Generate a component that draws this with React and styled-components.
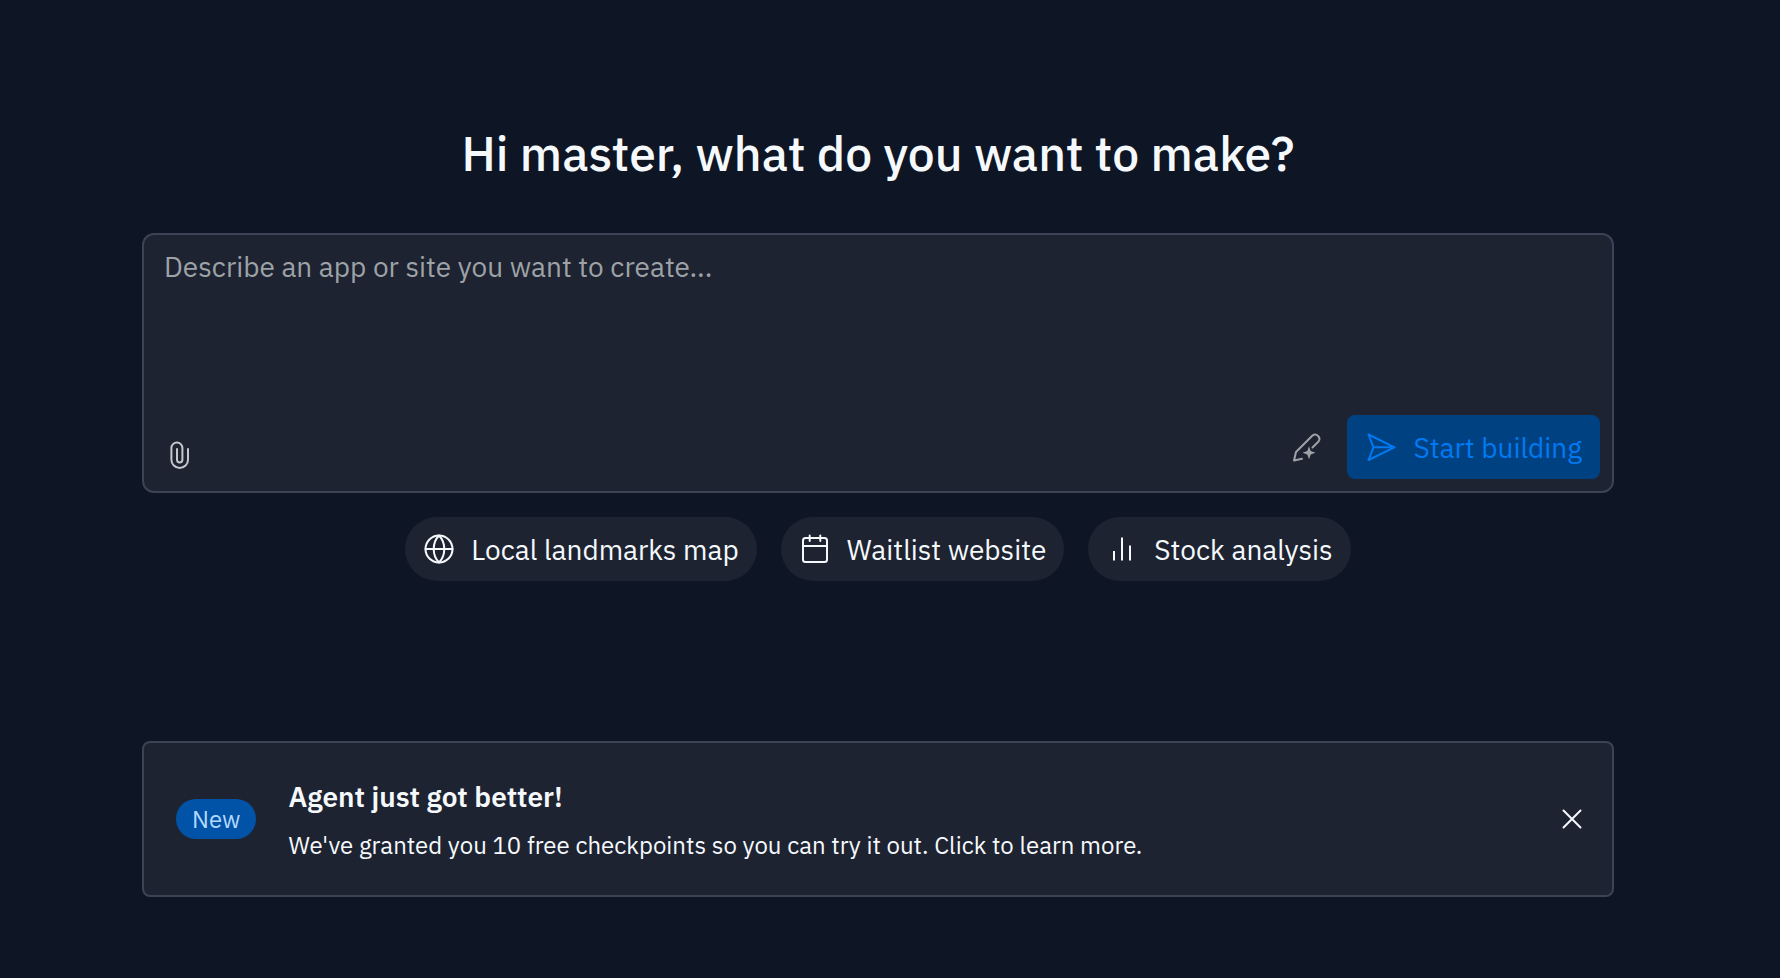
import React, { useState } from "react";
import styled, { createGlobalStyle } from "styled-components";

const suggestions = [
  { label: "Local landmarks map", icon: "globe" },
  { label: "Waitlist website", icon: "calendar" },
  { label: "Stock analysis", icon: "chart" },
];

const Icon = ({ name, size = 32 }) => (
  <svg
    width={size}
    height={size}
    viewBox="0 0 32 32"
    fill="none"
    stroke="currentColor"
    strokeWidth="2"
    strokeLinecap="round"
    strokeLinejoin="round"
    aria-hidden="true"
  >
    {name === "globe" && (
      <>
        <circle cx="16" cy="16" r="13.5" />
        <path d="M2.5 16h27" />
        <path d="M16 2.5c-3.6 3.7-5.3 8.5-5.3 13.5s1.7 9.8 5.3 13.5c3.6-3.7 5.3-8.5 5.3-13.5s-1.700-9.800-5.300-13.500z" />
      </>
    )}
    {name === "calendar" && (
      <>
        <rect x="4" y="5" width="24" height="24" rx="2.5" />
        <path d="M4 13h24M10.7 2.5V8M21.3 2.5V8" />
      </>
    )}
    {name === "chart" && (
      <path d="M8 18V27.5M16 4.5v23M24 12.5v15" strokeLinecap="butt" />
    )}
    {name === "clip" && (
      <path d="M24 10v10.700a8.300 8.300 0 0 1-16.600 0V9a5.500 5.500 0 0 1 11 0v11.700a2.700 2.700 0 0 1-5.400 0V10" />
    )}
    {name === "send" && (
      <path d="M3.500 3.500 29.500 16.300 3.500 29 8.500 16.300zM8.500 16.300H29.500" />
    )}
    {name === "pen" && (
      <>
        <path d="M11 27.700 3 29.500l2-8.500L21.500 4.500a4.300 4.300 0 0 1 6 6l-6 6" />
        <path
          d="M18 15.200l1.700 4.800 4.800 1.700-4.800 1.700L18 28.200l-1.700-4.800-4.800-1.700 4.800-1.700z"
          fill="currentColor"
          stroke="none"
        />
      </>
    )}
    {name === "close" && <path d="M7.5 7.5l17 17M24.5 7.5l-17 17" />}
  </svg>
);

export default function App() {
  const [prompt, setPrompt] = useState("");
  const [showBanner, setShowBanner] = useState(true);

  return (
    <>
      <GlobalStyle />
      <Page>
        <Title>Hi master, what do you want to make?</Title>

        <PromptBox onSubmit={(e) => e.preventDefault()}>
          <PromptInput
            aria-label="Describe an app or site"
            placeholder="Describe an app or site you want to create..."
            value={prompt}
            onChange={(e) => setPrompt(e.target.value)}
          />
          <Toolbar>
            <IconButton type="button" aria-label="Attach file">
              <Icon name="clip" />
            </IconButton>
            <Actions>
              <IconButton type="button" aria-label="Improve prompt" $dim>
                <Icon name="pen" />
              </IconButton>
              <StartButton type="submit" disabled={!prompt}>
                <Icon name="send" />
                Start building
              </StartButton>
            </Actions>
          </Toolbar>
        </PromptBox>

        <Suggestions>
          {suggestions.map(({ label, icon }) => (
            <Pill key={label} type="button" onClick={() => setPrompt(label)}>
              <Icon name={icon} />
              {label}
            </Pill>
          ))}
        </Suggestions>

        {showBanner && (
          <Banner>
            <Badge>New</Badge>
            <BannerText>
              <BannerTitle>Agent just got better!</BannerTitle>
              <BannerBody>
                We've granted you 10 free checkpoints so you can try it out.
                Click to learn more.
              </BannerBody>
            </BannerText>
            <IconButton
              type="button"
              aria-label="Dismiss"
              $bright
              onClick={() => setShowBanner(false)}
            >
              <Icon name="close" />
            </IconButton>
          </Banner>
        )}
      </Page>
    </>
  );
}

const GlobalStyle = createGlobalStyle`
  * {
    box-sizing: border-box;
  }

  body {
    margin: 0;
    background: #0e1524;
    color: #f5f9fc;
    font-family: "IBM Plex Sans", Roboto, sans-serif;
    font-size: 28px;
  }

  button,
  textarea {
    font: inherit;
  }
`;

const Page = styled.main`
  display: flex;
  flex-direction: column;
  min-height: 100vh;
  padding: 123px 166px 80px 142px;
`;

const Title = styled.h1`
  margin: 0 0 50px;
  font-size: 48px;
  font-weight: 500;
  line-height: 60px;
  text-align: center;
`;

const PromptBox = styled.form`
  display: flex;
  flex-direction: column;
  border: 2px solid #3c4354;
  border-radius: 12px;
  background: #1e2332;
`;

const PromptInput = styled.textarea`
  display: block;
  width: 100%;
  height: 180px;
  padding: 12px 20px;
  border: 0;
  outline: 0;
  resize: none;
  background: transparent;
  color: #f5f9fc;
  line-height: 40px;

  &::placeholder {
    color: #9da2a6;
  }
`;

const Toolbar = styled.div`
  display: flex;
  align-items: flex-end;
  justify-content: space-between;
  padding: 0 12px 12px;
`;

const Actions = styled.div`
  display: flex;
  align-items: center;
  gap: 16px;
`;

const IconButton = styled.button`
  display: flex;
  padding: 8px;
  border: 0;
  background: none;
  color: ${({ $dim, $bright }) =>
    $dim ? "#9da2a6" : $bright ? "#f5f9fc" : "#c2c8cc"};
  cursor: pointer;
`;

const StartButton = styled.button`
  display: flex;
  align-items: center;
  gap: 16px;
  height: 64px;
  padding: 0 18px;
  border: 0;
  border-radius: 8px;
  background: #004182;
  color: #0079f2;
`;

const Suggestions = styled.div`
  display: flex;
  flex-wrap: wrap;
  justify-content: center;
  gap: 24px;
  margin-top: 24px;
`;

const Pill = styled.button`
  display: flex;
  align-items: center;
  gap: 16px;
  height: 64px;
  padding: 0 18px;
  border: 0;
  border-radius: 32px;
  background: #1e2332;
  color: #f5f9fc;
  cursor: pointer;
`;

const Banner = styled.section`
  display: flex;
  align-items: center;
  gap: 32px;
  margin-top: 160px;
  padding: 30px 16px 30px 32px;
  border: 2px solid #3c4354;
  border-radius: 8px;
  background: #1e2332;
`;

const Badge = styled.span`
  padding: 0 16px;
  border-radius: 20px;
  background: #0053a6;
  color: #b3d9ff;
  font-size: 24px;
  line-height: 40px;
`;

const BannerText = styled.div`
  flex: 1;
  padding-top: 4px;
`;

const BannerTitle = styled.h2`
  margin: 0 0 8px;
  font-size: 28px;
  font-weight: 600;
  line-height: 40px;
`;

const BannerBody = styled.p`
  margin: 0;
  font-size: 24px;
  line-height: 40px;
`;
